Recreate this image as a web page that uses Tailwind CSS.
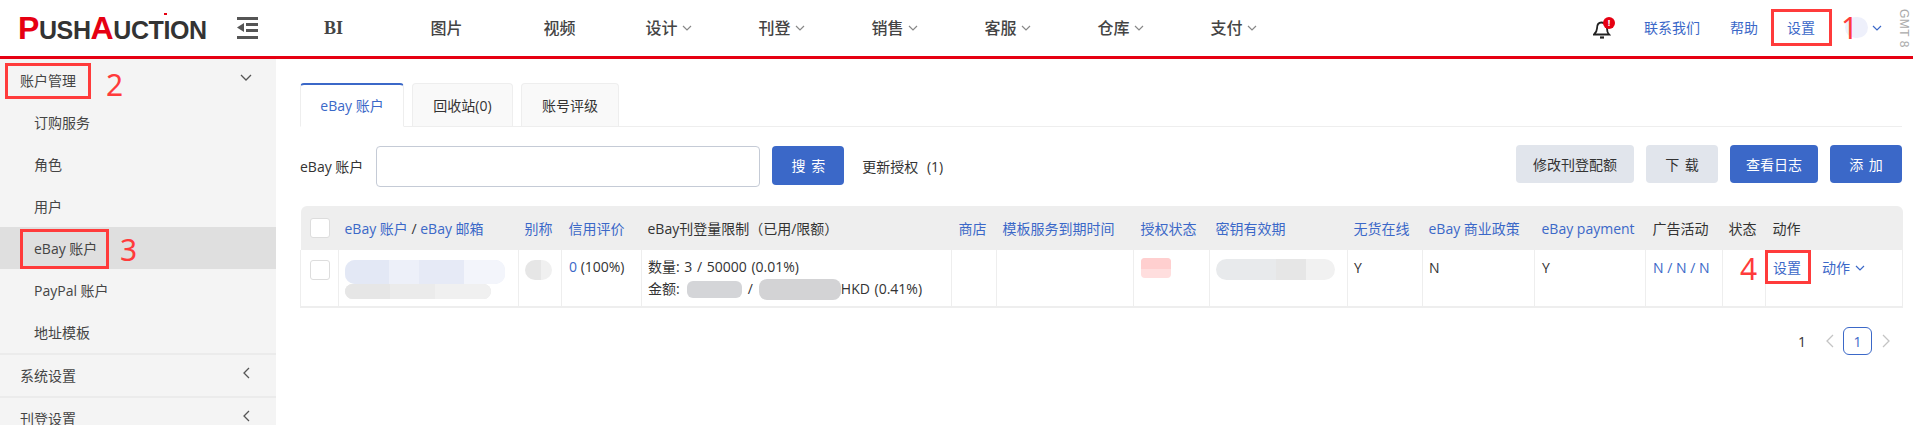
<!DOCTYPE html>
<html lang="zh">
<head>
<meta charset="utf-8">
<title>PushAuction</title>
<script src="https://cdn.jsdelivr.net/npm/@tailwindcss/browser@4"></script>
</head>
<body class="h-[425px] overflow-hidden bg-white text-[14px] text-[#333] font-['Open_Sans','Noto_Sans_CJK_SC',sans-serif]">
<div class="relative h-[425px] overflow-hidden">

<header class="flex h-[59px] items-center border-b-[3px] border-[#e60012] bg-white">
  <div class="flex w-[277px] shrink-0 items-center">
    <div class="relative ml-[18px] flex w-[188px] items-baseline font-bold font-['Liberation_Sans',sans-serif] leading-none text-[#333] text-[25px] tracking-[-0.4px]">
      <span class="text-[32px] text-[#e60012]">P</span><span>USH</span><span class="text-[32px] text-[#e60012]">A</span><span>UCTION</span>
      <span class="absolute top-[1px] left-[146px] h-[2px] w-[3px] bg-[#e60012]"></span>
    </div>
    <svg class="ml-[31px]" width="21" height="22" viewBox="0 0 21 22" fill="#555"><rect width="21" height="3"/><rect x="9" y="6" width="12" height="3"/><rect x="9" y="12" width="12" height="3"/><rect y="19" width="21" height="3"/><path d="M7 6v9L0 10.500z"/></svg>
  </div>
  <nav class="flex items-center text-[16px] font-medium text-[#444]">
    <a class="flex w-[113px] justify-center text-[18px] font-bold font-['Liberation_Serif',serif]">BI</a>
    <a class="flex w-[113px] justify-center">图片</a>
    <a class="flex w-[113px] justify-center">视频</a>
    <a class="flex w-[113px] items-center justify-center gap-[4px] pr-[8px]">设计<svg width="10" height="6" viewBox="0 0 10 6" fill="none" stroke="#888" stroke-width="1.200"><path d="M1 1l4 4 4-4"/></svg></a>
    <a class="flex w-[113px] items-center justify-center gap-[4px] pr-[8px]">刊登<svg width="10" height="6" viewBox="0 0 10 6" fill="none" stroke="#888" stroke-width="1.200"><path d="M1 1l4 4 4-4"/></svg></a>
    <a class="flex w-[113px] items-center justify-center gap-[4px] pr-[8px]">销售<svg width="10" height="6" viewBox="0 0 10 6" fill="none" stroke="#888" stroke-width="1.200"><path d="M1 1l4 4 4-4"/></svg></a>
    <a class="flex w-[113px] items-center justify-center gap-[4px] pr-[8px]">客服<svg width="10" height="6" viewBox="0 0 10 6" fill="none" stroke="#888" stroke-width="1.200"><path d="M1 1l4 4 4-4"/></svg></a>
    <a class="flex w-[113px] items-center justify-center gap-[4px] pr-[8px]">仓库<svg width="10" height="6" viewBox="0 0 10 6" fill="none" stroke="#888" stroke-width="1.200"><path d="M1 1l4 4 4-4"/></svg></a>
    <a class="flex w-[113px] items-center justify-center gap-[4px] pr-[8px]">支付<svg width="10" height="6" viewBox="0 0 10 6" fill="none" stroke="#888" stroke-width="1.200"><path d="M1 1l4 4 4-4"/></svg></a>
  </nav>
  <div class="ml-auto flex items-center text-[14px] text-[#3b68c8]">
    <span class="relative mr-[31px] block h-[22px] w-[20px]">
      <svg class="absolute top-[3px] left-0" width="18" height="19" viewBox="0 0 18 19" fill="none" stroke="#222" stroke-width="1.800"><path d="M1 14.500h15c-1.500-1.500-2-3-2-6 0-3-2-6-5.500-6S4 5.500 4 8.500c0 3-1.500 4.500-3 6z"/><path d="M7 17.500h4" stroke-width="2.200"/></svg>
      <span class="absolute top-0 left-[10px] flex h-[12px] w-[12px] items-center justify-center rounded-full bg-[#e60012] text-[9px] font-bold text-white leading-none">!</span>
    </span>
    <a class="mr-[30px]">联系我们</a>
    <a class="mr-[29px]">帮助</a>
    <a class="mr-[30px]">设置</a>
    <span class="block h-[21px] w-[23px] rounded-full bg-[#eef0fb]"></span>
    <svg class="ml-[4px]" width="10" height="6" viewBox="0 0 10 6" fill="none" stroke="#3b68c8" stroke-width="1.200"><path d="M1 1l4 4 4-4"/></svg>
    <span class="mr-[3px] ml-[16px] text-[12px] leading-none whitespace-pre tracking-[0.5px] text-[#aaa] font-['Liberation_Sans',sans-serif] [writing-mode:vertical-rl]">GMT 8</span>
  </div>
</header>

<div class="flex h-[366px]">
  <aside class="w-[276px] shrink-0 bg-[#f4f4f4] text-[#444]">
    <div class="flex h-[43px] items-center justify-between pr-[24px] pl-[20px]">
      <span>账户管理</span>
      <svg class="mb-[7px]" width="12" height="7" viewBox="0 0 12 7" fill="none" stroke="#555" stroke-width="1.300"><path d="M1 1l5 5 5-5"/></svg>
    </div>
    <ul>
      <li class="flex h-[41px] items-center pl-[34px]">订购服务</li>
      <li class="flex h-[42px] items-center pl-[34px]">角色</li>
      <li class="flex h-[42px] items-center pl-[34px]">用户</li>
      <li class="flex h-[42px] items-center bg-[#dfdfdf] pl-[34px]">eBay 账户</li>
      <li class="flex h-[42px] items-center pl-[34px]">PayPal 账户</li>
      <li class="flex h-[42px] items-center pl-[34px]">地址模板</li>
    </ul>
    <div class="flex h-[43px] items-center justify-between border-t-2 border-[#ebebeb] pr-[26px] pl-[20px]">
      <span>系统设置</span>
      <svg class="mb-[6px]" width="7" height="12" viewBox="0 0 7 12" fill="none" stroke="#555" stroke-width="1.300"><path d="M6 1L1 6l5 5"/></svg>
    </div>
    <div class="flex h-[43px] items-center justify-between border-t-2 border-[#ebebeb] pr-[26px] pl-[20px]">
      <span>刊登设置</span>
      <svg class="mb-[6px]" width="7" height="12" viewBox="0 0 7 12" fill="none" stroke="#555" stroke-width="1.300"><path d="M6 1L1 6l5 5"/></svg>
    </div>
  </aside>

  <main class="min-w-0 flex-1 pt-[24px] pr-[11px] pl-[24px]">
    <div class="flex h-[44px] items-end gap-[8px] border-b border-[#eee]">
      <a class="-mb-px flex h-[44px] w-[104px] items-center justify-center rounded-t-[4px] border border-t-2 border-[#eee] border-t-[#3b68c8] border-b-white bg-white text-[#3b68c8]">eBay 账户</a>
      <a class="flex h-[43px] w-[101px] items-center justify-center rounded-t-[4px] border border-b-0 border-[#eee] bg-[#f9f9f9]">回收站(0)</a>
      <a class="flex h-[43px] w-[98px] items-center justify-center rounded-t-[4px] border border-b-0 border-[#eee] bg-[#f9f9f9]">账号评级</a>
    </div>

    <div class="mt-[19px] flex h-[41px] items-start">
      <label class="mr-[13px] flex h-[41px] items-center">eBay 账户</label>
      <input type="text" class="h-[41px] w-[384px] rounded-[4px] border border-[#c5cbd6] bg-white">
      <button class="mr-[18px] ml-[12px] h-[39px] w-[72px] rounded-[4px] bg-[#3b68c8] text-white [word-spacing:2px]">搜 索</button>
      <span class="flex h-[41px] items-center whitespace-pre [word-spacing:5px]">更新授权 (1)</span>
      <div class="ml-auto flex gap-[12px]">
        <button class="-mt-px h-[38px] w-[118px] rounded-[4px] bg-[#e1e5ec]">修改刊登配额</button>
        <button class="-mt-px h-[38px] w-[72px] rounded-[4px] bg-[#e1e5ec] [word-spacing:2px]">下 载</button>
        <button class="-mt-px h-[38px] w-[88px] rounded-[4px] bg-[#3b68c8] text-white">查看日志</button>
        <button class="-mt-px h-[38px] w-[72px] rounded-[4px] bg-[#3b68c8] text-white [word-spacing:2px]">添 加</button>
      </div>
    </div>

    <table class="mt-[19px] w-[1602px] table-fixed border-collapse">
      <colgroup>
        <col class="w-[38px]"><col class="w-[180px]"><col class="w-[43px]"><col class="w-[80px]"><col class="w-[310px]"><col class="w-[45px]"><col class="w-[137px]"><col class="w-[76px]"><col class="w-[138px]"><col class="w-[75px]"><col class="w-[112px]"><col class="w-[111px]"><col class="w-[77px]"><col class="w-[43px]"><col class="w-[137px]">
      </colgroup>
      <thead>
        <tr class="h-[44px] bg-[#eee] text-left font-normal text-[#3b68c8]">
          <th class="rounded-tl-[6px] pl-[9px] font-normal"><span class="block h-[20px] w-[20px] rounded-[3px] border border-[#ddd] bg-white"></span></th>
          <th class="px-[6px] font-normal whitespace-nowrap">eBay 账户 <span class="text-[#333]">/</span> eBay 邮箱</th>
          <th class="px-[6px] font-normal whitespace-nowrap">别称</th>
          <th class="px-[7px] font-normal whitespace-nowrap">信用评价</th>
          <th class="px-[6px] font-normal whitespace-nowrap text-[#333]">eBay刊登量限制（已用/限额）</th>
          <th class="px-[7px] font-normal whitespace-nowrap">商店</th>
          <th class="px-[6px] font-normal whitespace-nowrap">模板服务到期时间</th>
          <th class="px-[7px] font-normal whitespace-nowrap">授权状态</th>
          <th class="px-[6px] font-normal whitespace-nowrap">密钥有效期</th>
          <th class="px-[6px] font-normal whitespace-nowrap">无货在线</th>
          <th class="px-[6px] font-normal whitespace-nowrap">eBay 商业政策</th>
          <th class="px-[7px] font-normal whitespace-nowrap">eBay payment</th>
          <th class="px-[7px] font-normal whitespace-nowrap text-[#333]">广告活动</th>
          <th class="px-[6px] font-normal whitespace-nowrap text-[#333]">状态</th>
          <th class="rounded-tr-[6px] px-[7px] font-normal whitespace-nowrap text-[#333]">动作</th>
        </tr>
      </thead>
      <tbody>
        <tr class="h-[57px] border-b-2 border-[#eee] align-top">
          <td class="border-x border-[#eee] pt-[10px] pl-[9px]"><span class="block h-[20px] w-[20px] rounded-[3px] border border-[#ddd] bg-white"></span></td>
          <td class="border-x border-[#eee] pt-[10px] pl-[6px]">
            <div class="flex h-[24px] w-[160px] overflow-hidden rounded-[10px] bg-[#e9edf8]"><span class="w-[44px] bg-[#e3e8f5]"></span><span class="w-[30px] bg-[#edf0f9]"></span><span class="w-[45px] bg-[#e6eaf6]"></span><span class="w-[41px] bg-[#f3f5fb]"></span></div>
            <div class="flex h-[15px] w-[146px] overflow-hidden rounded-[8px] bg-[#e8e8e8]"><span class="w-[45px] bg-[#e6e6e6]"></span><span class="w-[45px] bg-[#ebebeb]"></span><span class="w-[56px] bg-[#f0f0f0]"></span></div>
          </td>
          <td class="border-x border-[#eee] pt-[10px] pl-[6px]"><div class="flex h-[20px] w-[27px] overflow-hidden rounded-full"><span class="w-[16px] bg-[#e6e6e6]"></span><span class="w-[11px] bg-[#f0f0f0]"></span></div></td>
          <td class="border-x border-[#eee] pt-[6px] pl-[7px] whitespace-nowrap"><span class="text-[#3b68c8]">0</span> (100%)</td>
          <td class="border-x border-[#eee] pt-[6px] pl-[6px] whitespace-nowrap leading-[22px] [word-spacing:1px]">
            <div>数量: 3 / 50000 (0.01%)</div>
            <div class="flex items-center">金额:<span class="mr-[6px] ml-[7px] block h-[17px] w-[55px] rounded-[6px] bg-[#d4d5d8]"></span>/<span class="mr-0 ml-[6px] block h-[21px] w-[82px] rounded-[8px] bg-[#d3d3d5]"></span>HKD (0.41%)</div>
          </td>
          <td class="border-x border-[#eee]"></td>
          <td class="border-x border-[#eee]"></td>
          <td class="border-x border-[#eee] pt-[8px] pl-[7px]"><div class="h-[20px] w-[30px] overflow-hidden rounded-[4px] bg-[#ffdede]"><div class="h-[11px] bg-[#ffcfcf]"></div></div></td>
          <td class="border-x border-[#eee] pt-[9px] pl-[6px]"><div class="flex h-[21px] w-[119px] overflow-hidden rounded-full"><span class="w-[60px] bg-[#e8eaec]"></span><span class="w-[30px] bg-[#e6e6e6]"></span><span class="w-[29px] bg-[#f1f1f1]"></span></div></td>
          <td class="border-x border-[#eee] pt-[7px] pl-[6px]">Y</td>
          <td class="border-x border-[#eee] pt-[7px] pl-[6px]">N</td>
          <td class="border-x border-[#eee] pt-[7px] pl-[7px]">Y</td>
          <td class="border-x border-[#eee] pt-[7px] pl-[7px] whitespace-nowrap text-[#3b68c8]">N / N / N</td>
          <td class="border-x border-[#eee]"></td>
          <td class="border-x border-[#eee] pt-[7px] pl-[7px] whitespace-nowrap text-[#3b68c8]"><span class="inline-flex items-center">设置<span class="ml-[21px]">动作</span><svg class="ml-[5px]" width="10" height="6" viewBox="0 0 10 6" fill="none" stroke="#3b68c8" stroke-width="1.200"><path d="M1 1l4 4 4-4"/></svg></span></td>
        </tr>
      </tbody>
    </table>

    <div class="mt-[19px] flex h-[28px] items-center justify-end">
      <span class="mr-[19px]">1</span>
      <svg class="mr-[9px]" width="9" height="14" viewBox="0 0 9 14" fill="none" stroke="#c4c4c4" stroke-width="1.300"><path d="M8 1L2 7l6 6"/></svg>
      <span class="flex h-[28px] w-[29px] items-center justify-center rounded-[6px] border border-[#3b68c8] text-[#3b68c8]">1</span>
      <svg class="mr-[11px] ml-[10px]" width="9" height="14" viewBox="0 0 9 14" fill="none" stroke="#c4c4c4" stroke-width="1.300"><path d="M1 1l6 6-6 6"/></svg>
    </div>
  </main>
</div>

<!-- red annotations laid over the screenshot -->
<div class="absolute top-[9px] left-[1771px] h-[37px] w-[61px] border-[3px] border-[#ff3b3b]"></div>
<span class="absolute top-[8px] left-[1841px] text-[30px] leading-[40px] text-[#ff3b3b] font-['Noto_Sans',sans-serif]">1</span>
<div class="absolute top-[63px] left-[5px] h-[36px] w-[86px] border-[3px] border-[#ff3b3b]"></div>
<span class="absolute top-[65px] left-[106px] text-[30px] leading-[40px] text-[#ff3b3b] font-['Noto_Sans',sans-serif]">2</span>
<div class="absolute top-[229px] left-[20px] h-[40px] w-[89px] border-[3px] border-[#ff3b3b]"></div>
<span class="absolute top-[230px] left-[120px] text-[30px] leading-[40px] text-[#ff3b3b] font-['Noto_Sans',sans-serif]">3</span>
<div class="absolute top-[250px] left-[1765px] h-[34px] w-[46px] border-[3px] border-[#ff3b3b]"></div>
<span class="absolute top-[249px] left-[1740px] text-[30px] leading-[40px] text-[#ff3b3b] font-['Noto_Sans',sans-serif]">4</span>
</div>
</body>
</html>
